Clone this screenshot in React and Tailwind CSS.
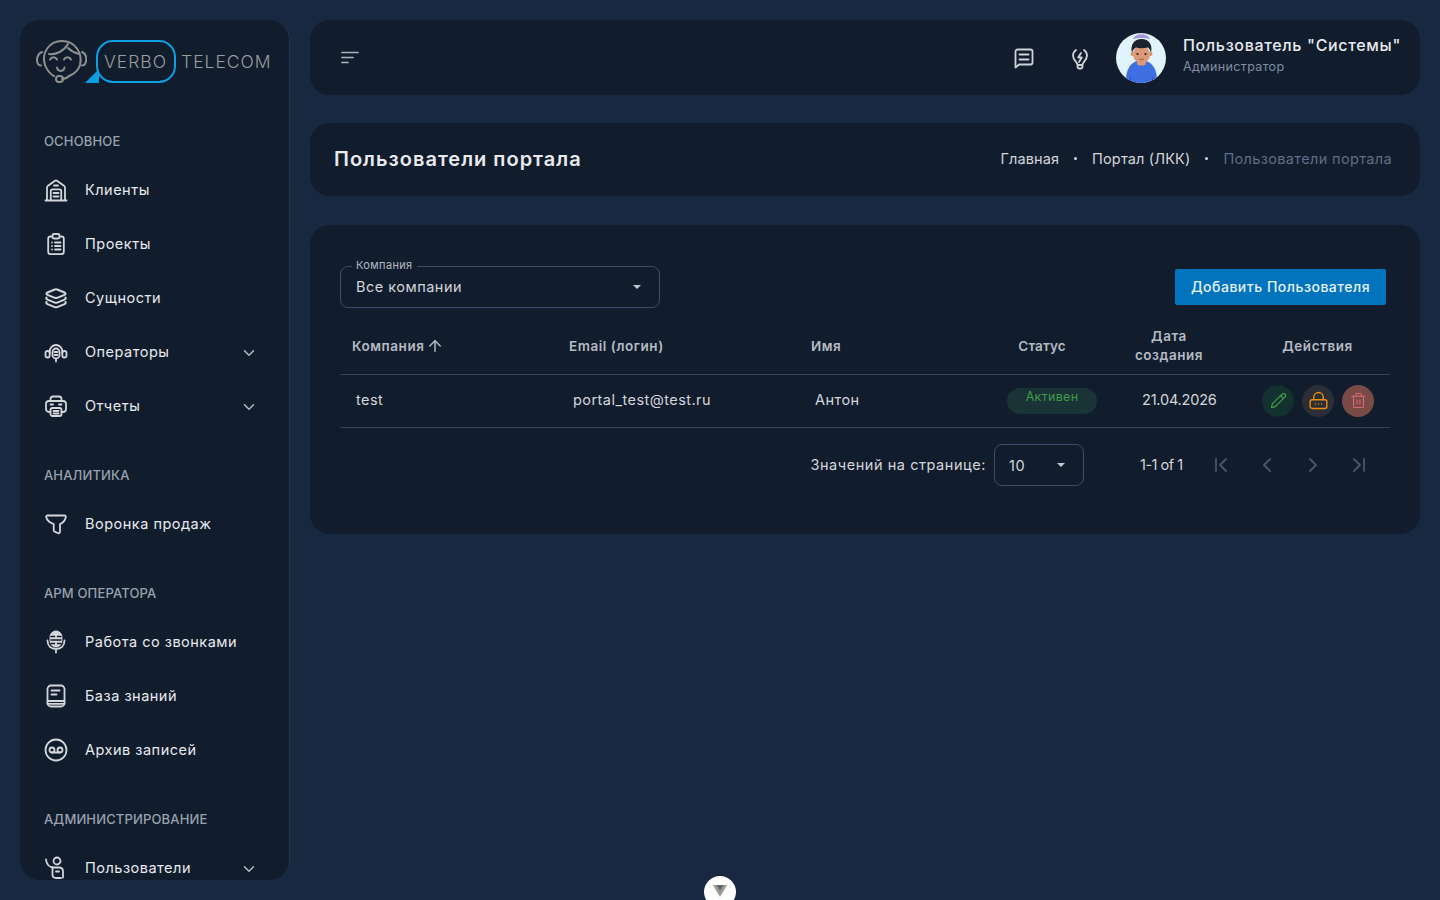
import React from 'react';
import { ChevronDown, ArrowUp, ChevronLeft, ChevronRight, ChevronFirst, ChevronLast, Pencil, Trash2 } from 'lucide-react';

const Svg = ({ children, size = 24, className = '' }) => (
  <svg width={size} height={size} viewBox="0 0 24 24" fill="none" stroke="currentColor" strokeWidth="1.8" strokeLinecap="round" strokeLinejoin="round" className={className}>
    {children}
  </svg>
);

const WarehouseIcon = () => (
  <Svg>
    <path d="M1.500 22.500h21" />
    <path d="M3 22V9.500c0-.6.200-1 .7-1.400L11 2.800c.6-.4 1.400-.4 2 0l7.300 5.300c.5.400.7.800.7 1.400V22" />
    <path d="M6.800 22V13c0-1 .7-1.700 1.700-1.700h7c1 0 1.700.7 1.700 1.700v9" />
    <path d="M9.500 15h5M9.500 18.500h5" />
    <path d="M10 7.500h4" />
  </Svg>
);

const ProjectsIcon = () => (
  <Svg>
    <path d="M8.500 4.500H6.500c-1.400 0-2.300 1-2.300 2.300v13c0 1.400 1 2.300 2.300 2.300h11c1.400 0 2.300-1 2.300-2.300v-13c0-1.400-1-2.300-2.300-2.300h-2" />
    <rect x="8.500" y="2" width="7" height="4.500" rx="1.500" />
    <path d="M8 10.500h.01M11 10.500h5.500M8 14h.01M11 14h5.500M8 17.500h.01M11 17.500h5.500" />
  </Svg>
);

const LayersIcon = () => (
  <svg width="24" height="24" viewBox="0 0 24 24" fill="none" stroke="currentColor" strokeWidth="2" strokeLinecap="round" strokeLinejoin="round">
    <path d="M10.800 3.500c.8-.3 1.600-.3 2.400 0l7.300 3c1.400.6 1.400 1.700 0 2.300l-7.300 3c-.8.300-1.600.3-2.400 0l-7.300-3c-1.400-.6-1.400-1.700 0-2.300z" />
    <path d="M2.500 11.500c-.5 1 0 1.700 1 2.100l7.300 3c.8.300 1.600.3 2.400 0l7.300-3c1-.4 1.500-1.100 1-2.100" />
    <path d="M2.500 16c-.5 1 0 1.700 1 2.100l7.300 3c.8.300 1.600.3 2.400 0l7.300-3c1-.4 1.500-1.100 1-2.100" />
  </svg>
);

const OperatorsIcon = () => (
  <Svg>
    <rect x="1.500" y="11" width="4.200" height="6.500" rx="2.100" />
    <rect x="18.300" y="11" width="4.200" height="6.500" rx="2.100" />
    <rect x="8.500" y="8.500" width="7" height="10" rx="3.500" />
    <path d="M5.700 13V11.500C5.700 8 8.500 5 12 5s6.300 3 6.300 6.500V13" />
    <path d="M12 18.500v3M10.500 12h3M10.500 15h3" />
  </Svg>
);

const ReportsIcon = () => (
  <Svg>
    <path d="M6.500 7V5c0-1.500 1-2.500 2.500-2.500h6c1.500 0 2.500 1 2.500 2.500v2" />
    <path d="M6.500 18H5c-1.600 0-3-1.300-3-3v-5c0-1.700 1.400-3 3-3h14c1.600 0 3 1.300 3 3v5c0 1.700-1.400 3-3 3h-1.500" />
    <rect x="6.500" y="14" width="11" height="8" rx="2" />
    <path d="M6.500 10.500h2.500M15 10.500h2.500M9.500 17h5M9.500 19.500h5" />
  </Svg>
);

const FunnelIcon = () => (
  <Svg>
    <path d="M3.500 3.500h17c1 0 1.500.8 1.300 1.700-.6 2.500-2.300 5.500-5.800 6.800v7.500c0 1.200-.9 2.100-1.800 1.700l-3.500-1.500c-.6-.3-1-.8-1-1.500V12C6.200 10.700 2.800 7.700 2.200 5.200 2 4.300 2.500 3.500 3.500 3.500z" />
  </Svg>
);

const MicIcon = () => (
  <svg width="24" height="24" viewBox="0 0 24 24" fill="none" stroke="currentColor" strokeWidth="1.8" strokeLinecap="round">
    <rect x="6.500" y="1.500" width="11" height="15" rx="5.500" fill="currentColor" />
    <path d="M7 6.500h3.500M13.500 6.500H17M7 10h10M7 13.500h3.500M13.500 13.500H17" stroke="#111c2d" strokeWidth="1.400" />
    <path d="M3.500 10.500c0 5.500 3.600 8.500 8.500 8.500s8.500-3 8.500-8.500M12 19v3.500" />
  </svg>
);

const BookIcon = () => (
  <Svg>
    <rect x="3.500" y="1.500" width="17" height="21" rx="3.500" />
    <path d="M3.500 17h17M3.500 19.800h17M7.500 6.500h8M7.500 10.500h5" />
  </Svg>
);

const VoicemailIcon = () => (
  <Svg>
    <circle cx="12" cy="12" r="10.500" />
    <circle cx="8" cy="12" r="2.500" />
    <circle cx="16" cy="12" r="2.500" />
    <path d="M8 14.500h8" />
  </Svg>
);

const UserIcon = () => (
  <Svg>
    <circle cx="13" cy="5" r="3.500" />
    <path d="M2 3.500c.3 4 3 7.500 7.500 8H15c2.500 0 4 1.700 4 4v6" />
    <path d="M8.500 11.500v7c0 2.200 1.300 3.500 3.500 3.500h5" />
    <path d="M12 15.500h3" />
  </Svg>
);

const BulbIcon = () => (
  <Svg>
    <path d="M9.500 19h5v1.500c0 1.200-1 2-2 2h-1c-1 0-2-.8-2-2z" />
    <path d="M9.500 18.500c0-2.500-4.500-4-4.500-9a7 7 0 0 1 3-5.500M16 4c1.800 1.300 3 3.300 3 5.500 0 5-4.500 6.500-4.500 9" />
    <path d="M13 7l-2.800 4.500h3.600L11 16" />
  </Svg>
);

const ChatIcon = () => (
  <Svg>
    <path d="M3.500 21.500V5.500c0-1.200.8-2 2-2h13c1.200 0 2 .8 2 2v11c0 1.200-.8 2-2 2H7z" />
    <path d="M7.500 8.500h9M7.500 13.500h9" />
  </Svg>
);

const LockIcon = () => (
  <Svg size={19}>
    <rect x="1.500" y="11" width="21" height="11" rx="2.500" />
    <path d="M6 11V8a6 6 0 0 1 12 0v3" />
    <path d="M8 16.500h.01M12 16.500h.01M16 16.500h.01" />
  </Svg>
);

const FaceLogo = () => (
  <svg width="51" height="44" viewBox="0 0 51 44" fill="none" stroke="#8d8f90" strokeWidth="2" strokeLinecap="round">
    <path d="M9 25C5 13 13 1 26 1c13 0 21 12 18 24-1.500 5-6 9-11 11" />
    <path d="M9 25c2 5 5 9 9 11" />
    <path d="M13 14c7 1 15-3 19-10M32 8c3 3 7 5 11 6" />
    <path d="M6 12C1 14 0 20 2 24c.500 1 1.500 1.500 3 1.500" />
    <path d="M46 12c5 2 5 8 3 12-.500 1-1.500 1.500-3 1.500" />
    <path d="M14 19.500c1.500-3 5.500-3 7 0M28 19.500c1.500-3 5.500-3 7 0" />
    <path d="M21 27.500c.500 4.500 7 4.500 7.500 0" />
    <path d="M33 36c-2 2-4 3-7 3" />
    <rect x="20" y="36" width="7" height="6" rx="3" />
  </svg>
);

const Avatar = () => (
  <svg width="50" height="50" viewBox="0 0 50 50">
    <defs>
      <clipPath id="avatar-clip"><circle cx="25" cy="25" r="25" /></clipPath>
    </defs>
    <g clipPath="url(#avatar-clip)">
      <rect width="50" height="50" fill="#e2f4fb" />
      <path d="M10 50c-.5-13 4-20 11-22h9c7 2 11.500 9 11 22z" fill="#3e6fe0" />
      <path d="M14 44c.5 2 .5 4 .5 6M37 44c-.5 2-.5 4-.5 6" stroke="#2c55b8" strokeWidth="1" fill="none" />
      <rect x="21.500" y="26" width="8" height="5" fill="#c9825f" />
      <ellipse cx="25.500" cy="30.500" rx="4.500" ry="2" fill="#dc9a78" />
      <circle cx="16.500" cy="21" r="2" fill="#d8936f" />
      <circle cx="34.500" cy="21" r="2" fill="#d8936f" />
      <ellipse cx="25.500" cy="21.500" rx="8.500" ry="9" fill="#dc9a78" />
      <path d="M16 20c-2-8 2-14 9.500-14S37 12 35 20c-.5-2.500-1.500-4.500-3-5.500-4 1-9 1-12 0-2 1-3.500 3-4 5.500z" fill="#1c2230" />
      <path d="M17 6c2-6.500 15-6.500 17 0-4.500-1.500-12.500-1.500-17 0z" fill="#a796dc" />
      <circle cx="21.500" cy="21" r="1.100" fill="#2a1e1b" />
      <circle cx="29.500" cy="21" r="1.100" fill="#2a1e1b" />
      <path d="M23 26c1.500.8 3.500.8 5 0" stroke="#8c4a3a" strokeWidth="0.800" fill="none" />
    </g>
  </svg>
);

const nav = [
  {
    title: 'ОСНОВНОЕ',
    items: [
      { label: 'Клиенты', icon: <WarehouseIcon /> },
      { label: 'Проекты', icon: <ProjectsIcon /> },
      { label: 'Сущности', icon: <LayersIcon /> },
      { label: 'Операторы', icon: <OperatorsIcon />, more: true },
      { label: 'Отчеты', icon: <ReportsIcon />, more: true },
    ],
  },
  { title: 'АНАЛИТИКА', items: [{ label: 'Воронка продаж', icon: <FunnelIcon /> }] },
  {
    title: 'АРМ ОПЕРАТОРА',
    items: [
      { label: 'Работа со звонками', icon: <MicIcon /> },
      { label: 'База знаний', icon: <BookIcon /> },
      { label: 'Архив записей', icon: <VoicemailIcon /> },
    ],
  },
  { title: 'АДМИНИСТРИРОВАНИЕ', items: [{ label: 'Пользователи', icon: <UserIcon />, more: true }] },
];

const Sidebar = () => (
  <aside className="w-[270px] h-[860px] shrink-0 overflow-hidden rounded-[20px] bg-[#111c2d] border-r border-[#22324a]">
    <div className="h-[79px] pl-[16px] pt-[20px] flex items-start gap-[9px]">
      <FaceLogo />
      <div className="relative flex items-center h-[43px]">
        <div className="w-[80px] h-[43px] pl-[6px] flex items-center rounded-[17px] border-[2.500px] border-[#0b9fe3] text-[17.500px] font-light text-[#9a9c9d] tracking-[1px] leading-none">VERBO</div>
        <div className="absolute left-[-11px] bottom-[0px] w-0 h-0 border-l-[14px] border-l-transparent border-b-[14px] border-b-[#0b9fe3]" />
        <span className="ml-[5px] text-[17.500px] font-light text-[#9a9c9d] tracking-[1px] leading-none">TELECOM</span>
      </div>
    </div>
    {nav.map((section) => (
      <div key={section.title} className="mt-[20px]">
        <div className="h-[44px] pl-[24px] pt-[2px] flex items-center text-[13px] font-medium tracking-[0.15px] text-[#99a2ae]">{section.title}</div>
        {section.items.map((item) => (
          <div key={item.label} className="h-[54px] flex items-center pl-[24px] pr-[31px]">
            <span className="w-[24px] h-[24px] text-[#d3d6db]">{item.icon}</span>
            <span className="ml-[17px] flex-1 text-[14.500px] tracking-[0.5px] text-[#e8eaed]">{item.label}</span>
            {item.more && <ChevronDown size={18} strokeWidth={2} className="mt-[2px] text-[#b6bac1]" />}
          </div>
        ))}
      </div>
    ))}
  </aside>
);

const Topbar = () => (
  <header className="h-[75px] rounded-[20px] bg-[#111c2d] flex items-center pl-[28px] pr-[19px]">
    <svg width="24" height="24" viewBox="0 0 24 24" fill="none" stroke="#aeb4bc" strokeWidth="1.700" strokeLinecap="round">
      <path d="M4 6.500h16M4 11.500h11M4 16.500h6" />
    </svg>
    <div className="ml-auto flex items-center">
      <span className="text-[#cfd3d9]"><ChatIcon /></span>
      <span className="ml-[32px] text-[#cfd3d9]"><BulbIcon /></span>
      <span className="ml-[24px]"><Avatar /></span>
      <div className="ml-[17px] pb-[6px]">
        <div className="text-[16px] font-medium tracking-[0.67px] text-[#e8eaed] leading-[24px] whitespace-nowrap">Пользователь "Системы"</div>
        <div className="text-[12.500px] tracking-[0.35px] text-[#7f8ea3] leading-[20px]">Администратор</div>
      </div>
    </div>
  </header>
);

const PageTitle = () => (
  <section className="h-[73px] mt-[28px] pb-[2px] rounded-[20px] bg-[#111c2d] flex items-center pl-[24px] pr-[28px]">
    <h1 className="text-[20px] font-semibold tracking-[1px] text-[#e8eaed]">Пользователи портала</h1>
    <div className="ml-auto flex items-center text-[14.500px] tracking-[0.35px] text-[#d3d6db]">
      <span className="tracking-[0.1px]">Главная</span>
      <span className="mx-[15px] w-[3px] h-[3px] rounded-full bg-[#d3d6db]" />
      <span className="tracking-[0.15px]">Портал (ЛКК)</span>
      <span className="mx-[15px] w-[3px] h-[3px] rounded-full bg-[#d3d6db]" />
      <span className="text-[#5f6e84]">Пользователи портала</span>
    </div>
  </section>
);

const Caret = () => <span className="w-0 h-0 border-x-[4px] border-x-transparent border-t-[4px] border-t-[#c5c9cf]" />;

const Users = () => (
  <section className="h-[309px] mt-[29px] rounded-[20px] bg-[#111c2d] pt-[41px] px-[30px]">
    <div className="flex items-center justify-between">
      <div className="relative w-[320px] h-[42px] rounded-[8px] border border-[#3b4d6b] flex items-center justify-between pl-[15px] pr-[18px]">
        <span className="absolute left-[11px] top-[-8px] bg-[#111c2d] px-[4px] text-[11px] leading-[12px] tracking-[0.35px] text-[#b5bac2]">Компания</span>
        <span className="text-[14.500px] tracking-[0.5px] text-[#d3d6db]">Все компании</span>
        <Caret />
      </div>
      <button className="w-[211px] h-[36px] mr-[4px] pb-[2px] rounded-[2px] bg-[#0274be] text-[14px] font-medium tracking-[0.5px] text-[#e8f2f9]">Добавить Пользователя</button>
    </div>
    <table className="mt-[10px] w-[1050px] table-fixed border-collapse">
      <colgroup>
        <col className="w-[217px]" />
        <col className="w-[242px]" />
        <col className="w-[180px]" />
        <col className="w-[126px]" />
        <col className="w-[128px]" />
        <col className="w-[157px]" />
      </colgroup>
      <thead>
        <tr className="h-[56px] border-b border-[#33435c] text-[13.500px] font-semibold tracking-[0.55px] text-[#b5bac2]">
          <th className="pl-[12px] text-left font-semibold">
            <span className="inline-flex items-center">Компания <ArrowUp size={18} strokeWidth={2} className="ml-[1px]" /></span>
          </th>
          <th className="pl-[12px] text-left font-semibold">Email (логин)</th>
          <th className="pl-[12px] text-left font-semibold">Имя</th>
          <th className="text-center font-semibold tracking-[0.1px]">Статус</th>
          <th className="text-center font-semibold leading-[19px]">Дата<br />создания</th>
          <th className="pl-[12px] text-center font-semibold">Действия</th>
        </tr>
      </thead>
      <tbody>
        <tr className="h-[53px] border-b border-[#33435c] text-[14.500px] tracking-[0.45px] text-[#d3d6db]">
          <td className="pl-[16px] pb-[2px]">test</td>
          <td className="pl-[16px] pb-[2px]">portal_test@test.ru</td>
          <td className="pl-[16px] pb-[2px]">Антон</td>
          <td className="pl-[28px]">
            <div className="w-[90px] h-[26px] rounded-full bg-[#1a3336] text-center text-[12.500px] leading-[18px] tracking-[0.3px] text-[#3f9a4c]">Активен</div>
          </td>
          <td className="pl-[37px] pb-[2px] tracking-[-0.2px]">21.04.2026</td>
          <td className="pl-[29px]">
            <div className="flex items-center gap-[8px]">
              <span className="w-[32px] h-[32px] rounded-full bg-[#12312f] flex items-center justify-center text-[#45a84f]"><Pencil size={17} strokeWidth={1.5} /></span>
              <span className="w-[32px] h-[32px] rounded-full bg-[#2b2e36] flex items-center justify-center text-[#ef8d0a]"><LockIcon /></span>
              <span className="w-[32px] h-[32px] rounded-full bg-[#7a4b46] flex items-center justify-center text-[#d96a7a]"><Trash2 size={17} strokeWidth={1.5} /></span>
            </div>
          </td>
        </tr>
      </tbody>
    </table>
    <div className="mt-[16px] flex items-center justify-end pr-[19px] text-[14.500px] tracking-[0.55px] text-[#d3d6db]">
      <span>Значений на странице:</span>
      <div className="ml-[8px] w-[90px] h-[42px] rounded-[8px] border border-[#3b4d6b] flex items-center justify-between pl-[14px] pr-[18px]">
        <span className="pt-[2px]">10</span>
        <Caret />
      </div>
      <span className="ml-[56px] w-[43px] whitespace-nowrap tracking-[-0.5px]">1-1 of 1</span>
      <div className="ml-[26px] flex items-center gap-[22px] text-[#4b5666]">
        <ChevronFirst size={24} strokeWidth={1.8} />
        <ChevronLeft size={24} strokeWidth={1.8} />
        <ChevronRight size={24} strokeWidth={1.8} />
        <ChevronLast size={24} strokeWidth={1.8} />
      </div>
    </div>
  </section>
);

export default function App() {
  return (
    <div className="relative h-[900px] overflow-hidden bg-[#172840] p-[20px] flex gap-[20px] font-['Inter',sans-serif]">
      <Sidebar />
      <main className="flex-1 min-w-0">
        <Topbar />
        <PageTitle />
        <Users />
      </main>
      <div className="absolute left-[704px] top-[876px] w-[32px] h-[32px] rounded-full bg-white flex items-start justify-center pt-[9px]">
        <svg width="14" height="12" viewBox="0 0 14 12">
          <path d="M0 0h14L7 12z" fill="#9a9a9a" />
          <path d="M3.500 0h7L7 6z" fill="#666" />
        </svg>
      </div>
    </div>
  );
}
